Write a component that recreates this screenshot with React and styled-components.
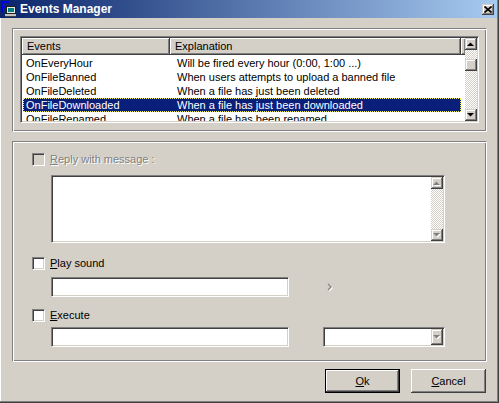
import React from 'react';
import styled, { createGlobalStyle, css } from 'styled-components';

const GlobalStyle = createGlobalStyle`
  html, body {
    margin: 0;
    padding: 0;
    background: #d4d0c8;
  }
  body {
    font-family: 'Liberation Sans', Arial, sans-serif;
    font-size: 11px;
    color: #000;
  }
`;

const events = [
    { name: 'OnEveryHour', text: 'Will be fired every hour (0:00, 1:00 ...)' },
    { name: 'OnFileBanned', text: 'When users attempts to upload a banned file' },
    { name: 'OnFileDeleted', text: 'When a file has just been deleted' },
    { name: 'OnFileDownloaded', text: 'When a file has just been downloaded', selected: true },
    { name: 'OnFileRenamed', text: 'When a file has been renamed' },
];

// classic 3d edges
const raised = css`
  background: #d4d0c8;
  box-shadow: inset -1px -1px #404040, inset 1px 1px #d4d0c8, inset -2px -2px #808080, inset 2px 2px #ffffff;
`;

const sunken = css`
  box-sizing: border-box;
  border: 1px solid;
  border-color: #808080 #ffffff #ffffff #808080;
  box-shadow: inset 1px 1px #404040, inset -1px -1px #d4d0c8;
  padding: 1px;
`;

const checker = css`
  background: repeating-conic-gradient(#ffffff 0 25%, #d4d0c8 0 50%) 0 0 / 2px 2px;
`;

function Arrow({ up, disabled }) {
    const pts = up ? '0,4 3.5,0.5 7,4' : '0,0 7,0 3.5,3.5';
    return (
        <svg width="8" height="5" viewBox="0 0 8 5">
            {disabled && <polygon points={pts} fill="#fff" transform="translate(1,1)" />}
            <polygon points={pts} fill={disabled ? '#808080' : '#000'} />
        </svg>
    );
}

function AppIcon() {
    return (
        <svg width="16" height="17" viewBox="0 0 16 17">
            <path d="M0 0h8v2H2v3h4v2H2v4H0z" fill="#0000e8" />
            <rect x="5.5" y="5.5" width="9" height="7" fill="#e8e8e8" stroke="#202020" />
            <rect x="7" y="7" width="6" height="4" fill="#008080" />
            <rect x="4" y="13" width="11" height="3" fill="#c0c0c0" />
            <rect x="4" y="15" width="11" height="1" fill="#404040" />
        </svg>
    );
}

function App() {
    return (
        <>
            <GlobalStyle />
            <Window>
                <TitleBar>
                    <AppIcon />
                    <Title>Events Manager</Title>
                    <CloseButton>
                        <svg width="8" height="7" viewBox="0 0 8 7">
                            <path d="M0.5 0.5l7 6M7.5 0.5l-7 6" stroke="#000" strokeWidth="1.6" />
                        </svg>
                    </CloseButton>
                </TitleBar>

                <Body>
                    <GroupBox height={104} pad="7px">
                        <ListView>
                            <ListContent>
                                <HeaderRow>
                                    <HeaderCell width={148}>Events</HeaderCell>
                                    <HeaderCell width={291}>Explanation</HeaderCell>
                                    <HeaderCell width={5} />
                                </HeaderRow>
                                {events.map(ev => (
                                    <Row key={ev.name} selected={ev.selected}>
                                        <NameCell>{ev.name}</NameCell>
                                        <TextCell>{ev.text}</TextCell>
                                    </Row>
                                ))}
                            </ListContent>
                            <ScrollBar>
                                <ScrollButton><Arrow up /></ScrollButton>
                                <Track>
                                    <Thumb />
                                </Track>
                                <ScrollButton><Arrow /></ScrollButton>
                            </ScrollBar>
                        </ListView>
                    </GroupBox>

                    <GroupBox height={221} pad="11px 0 0 19px" gapTop={9}>
                        <CheckRow>
                            <CheckBox disabled />
                            <Label disabled><u>R</u>eply with message :</Label>
                        </CheckRow>
                        <MessageBox>
                            <MessageArea />
                            <ScrollBar>
                                <ScrollButton><Arrow up disabled /></ScrollButton>
                                <Track />
                                <ScrollButton><Arrow disabled /></ScrollButton>
                            </ScrollBar>
                        </MessageBox>

                        <CheckRow gapTop={14}>
                            <CheckBox />
                            <Label><u>P</u>lay sound</Label>
                        </CheckRow>
                        <FieldRow gapTop={7}>
                            <TextInput />
                            <PlayGlyph>
                                <svg width="7" height="9" viewBox="0 0 7 9">
                                    <path d="M2 2l3 3-3 3" stroke="#fff" strokeWidth="1.2" fill="none" />
                                    <path d="M1 1l3 3-3 3" stroke="#808080" strokeWidth="1.2" fill="none" />
                                </svg>
                            </PlayGlyph>
                        </FieldRow>

                        <CheckRow gapTop={12}>
                            <CheckBox />
                            <Label><u>E</u>xecute</Label>
                        </CheckRow>
                        <FieldRow gapTop={5}>
                            <TextInput />
                            <Combo>
                                <ComboText />
                                <ComboButton><Arrow disabled /></ComboButton>
                            </Combo>
                        </FieldRow>
                    </GroupBox>

                    <ButtonRow>
                        <PushButton isDefault><u>O</u>k</PushButton>
                        <PushButton><u>C</u>ancel</PushButton>
                    </ButtonRow>
                </Body>
            </Window>
        </>
    );
}

const Window = styled.div`
  width: 499px;
  height: 403px;
  box-sizing: border-box;
  background: #d4d0c8;
  border-right: 1px solid #404040;
  border-bottom: 1px solid #404040;
  box-shadow: inset -1px -1px #808080, inset 1px 0 #ffffff;
  display: flex;
  flex-direction: column;
  overflow: hidden;
`;

const TitleBar = styled.div`
  height: 18px;
  margin-right: 1px;
  background: linear-gradient(to right, #0a246a, #a6caf0);
  display: flex;
  align-items: center;
  padding-left: 1px;
  svg { flex-shrink: 0; }
`;

const Title = styled.div`
  flex: 1;
  margin-left: 3px;
  color: #fff;
  font-weight: bold;
  font-size: 12px;
  line-height: 18px;
`;

const CloseButton = styled.div`
  width: 12px;
  height: 11px;
  margin: 1px 3px 0 0;
  ${raised};
  display: flex;
  align-items: center;
  justify-content: center;
`;

const Body = styled.div`
  flex: 1;
  padding: 10px 11px 0 12px;
  display: flex;
  flex-direction: column;
`;

const GroupBox = styled.div`
  box-sizing: border-box;
  width: 475px;
  height: ${({ height }) => height}px;
  margin-top: ${({ gapTop }) => gapTop || 0}px;
  padding: ${({ pad }) => pad};
  border: 1px solid;
  border-color: #808080 #ffffff #ffffff #808080;
  box-shadow: inset 1px 1px #ffffff, inset -1px -1px #808080;
  display: flex;
  flex-direction: column;
`;

const ListView = styled.div`
  ${sunken};
  width: 459px;
  height: 87px;
  display: flex;
`;

const ListContent = styled.div`
  flex: 1;
  background: #fff;
  overflow: hidden;
`;

const HeaderRow = styled.div`
  display: flex;
  height: 18px;
`;

const HeaderCell = styled.div`
  box-sizing: border-box;
  width: ${({ width }) => width}px;
  flex-shrink: 0;
  height: 17px;
  line-height: 16px;
  padding-left: 5px;
  ${raised};
  box-shadow: inset -1px -1px #404040, inset 1px 1px #ffffff, inset -2px -2px #808080;
  white-space: nowrap;
`;

const Row = styled.div`
  display: grid;
  grid-template-columns: 147px 291px;
  height: 14px;
  line-height: 14px;
  margin-left: 1px;
  width: 438px;
  white-space: nowrap;
  background: ${({ selected }) => selected ? '#0a1f7a' : 'transparent'};
  color: ${({ selected }) => selected ? '#fff' : '#000'};
  outline: ${({ selected }) => selected ? '1px dotted #f0f060' : 'none'};
  outline-offset: -1px;
`;

const NameCell = styled.div`
  padding-left: 3px;
`;

const TextCell = styled.div`
  padding-left: 7px;
`;

const ScrollBar = styled.div`
  width: 12px;
  flex-shrink: 0;
  display: flex;
  flex-direction: column;
`;

const ScrollButton = styled.div`
  height: 12px;
  flex-shrink: 0;
  ${raised};
  display: flex;
  align-items: center;
  justify-content: center;
`;

const Track = styled.div`
  flex: 1;
  ${checker};
`;

const Thumb = styled.div`
  height: 12px;
  margin-top: 9px;
  ${raised};
`;

const CheckRow = styled.div`
  display: flex;
  align-items: center;
  gap: 5px;
  height: 13px;
  margin-top: ${({ gapTop }) => gapTop || 0}px;
`;

const CheckBox = styled.div`
  ${sunken};
  width: 13px;
  height: 13px;
  background: ${({ disabled }) => disabled ? '#d4d0c8' : '#fff'};
`;

const Label = styled.span`
  line-height: 13px;
  color: ${({ disabled }) => disabled ? '#808080' : '#000'};
  text-shadow: ${({ disabled }) => disabled ? '1px 1px 0 #fff' : 'none'};
  white-space: nowrap;
`;

const MessageBox = styled.div`
  ${sunken};
  width: 394px;
  height: 68px;
  margin: 9px 0 0 19px;
  display: flex;
`;

const MessageArea = styled.div`
  flex: 1;
  background: #fff;
`;

const FieldRow = styled.div`
  display: flex;
  align-items: center;
  margin: ${({ gapTop }) => gapTop || 0}px 0 0 19px;
`;

const TextInput = styled.div`
  ${sunken};
  width: 238px;
  height: 20px;
  background: #fff;
`;

const PlayGlyph = styled.div`
  margin-left: 38px;
  display: flex;
`;

const Combo = styled.div`
  ${sunken};
  width: 122px;
  height: 20px;
  margin-left: 34px;
  display: flex;
`;

const ComboText = styled.div`
  flex: 1;
  background: #fff;
`;

const ComboButton = styled.div`
  width: 12px;
  ${raised};
  display: flex;
  align-items: center;
  justify-content: center;
`;

const ButtonRow = styled.div`
  display: flex;
  justify-content: flex-end;
  gap: 11px;
  margin-top: 7px;
  width: 474px;
`;

const PushButton = styled.div`
  box-sizing: border-box;
  width: 75px;
  height: 24px;
  display: flex;
  align-items: center;
  justify-content: center;
  background: #d4d0c8;
  border: ${({ isDefault }) => isDefault ? '1px solid #000' : 'none'};
  box-shadow: ${({ isDefault }) => isDefault
        ? 'inset -1px -1px #404040, inset 1px 1px #ffffff, inset -2px -2px #808080'
        : 'inset -1px -1px #404040, inset 1px 1px #ffffff, inset -2px -2px #808080, inset 2px 2px #d4d0c8'};
  font-size: 11px;
`;

export default App;
